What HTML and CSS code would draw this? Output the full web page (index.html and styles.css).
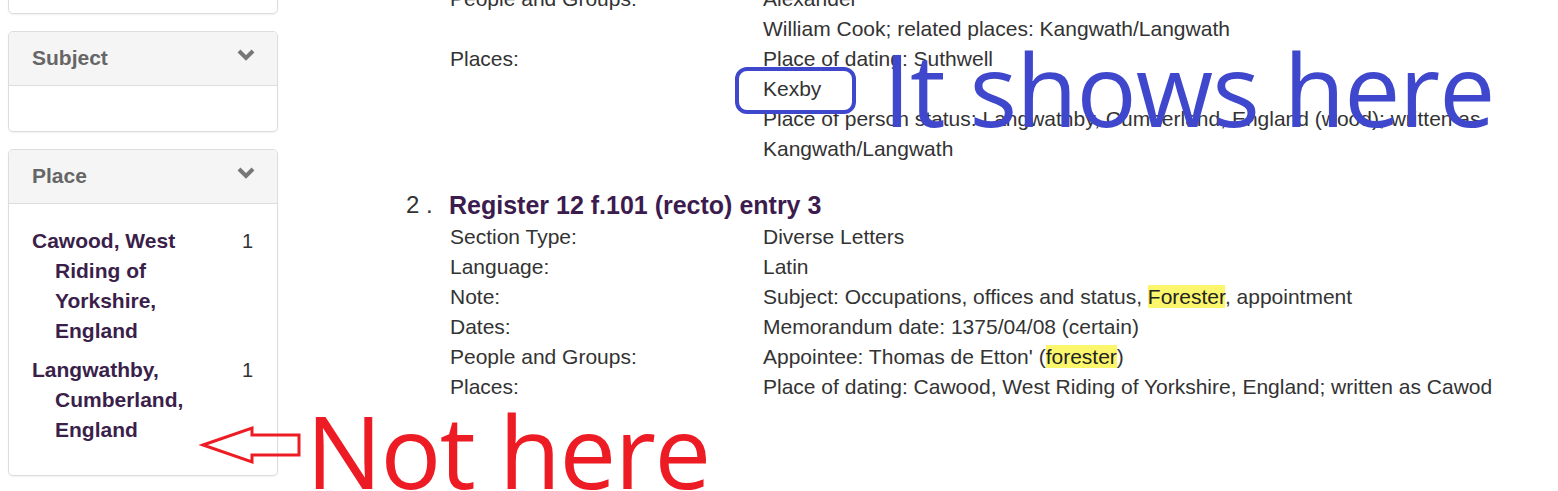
FILE: index.html
```html
<!DOCTYPE html>
<html lang="en">
<head>
<meta charset="utf-8">
<title>Search results</title>
<link rel="stylesheet" href="styles.css">
</head>
<body>
<div class="page">
  <aside class="sidebar">
    <div class="panel panel-cut"></div>
    <div class="panel">
      <div class="panel-head">
        <span>Subject</span>
        <svg class="chev" width="18" height="12" viewBox="0 0 18 12"><polyline points="2,2 9,9 16,2" fill="none" stroke="#777" stroke-width="4"/></svg>
      </div>
      <div class="panel-body empty"></div>
    </div>
    <div class="panel">
      <div class="panel-head">
        <span>Place</span>
        <svg class="chev" width="18" height="12" viewBox="0 0 18 12"><polyline points="2,2 9,9 16,2" fill="none" stroke="#777" stroke-width="4"/></svg>
      </div>
      <div class="panel-body">
        <ul class="facets">
          <li><span class="facet-label">Cawood, West Riding of Yorkshire, England</span><span class="count">1</span></li>
          <li><span class="facet-label">Langwathby, Cumberland, England</span><span class="count">1</span></li>
        </ul>
      </div>
    </div>
  </aside>

  <main class="results">
    <div class="entry entry-cut">
      <div class="fields">
        <div class="label">People and Groups:</div>
        <div class="value">Alexander<br>William Cook; related places: Kangwath/Langwath</div>
        <div class="label">Places:</div>
        <div class="value">Place of dating: Suthwell<br>Kexby<br>Place of person status: Langwathby, Cumberland, England (wood); written as Kangwath/Langwath</div>
      </div>
    </div>
    <div class="entry">
      <div class="entry-title"><span class="num">2 .</span><span class="title">Register 12 f.101 (recto) entry 3</span></div>
      <div class="fields">
        <div class="label">Section Type:</div>
        <div class="value">Diverse Letters</div>
        <div class="label">Language:</div>
        <div class="value">Latin</div>
        <div class="label">Note:</div>
        <div class="value">Subject: Occupations, offices and status, <mark>Forester</mark>, appointment</div>
        <div class="label">Dates:</div>
        <div class="value">Memorandum date: 1375/04/08 (certain)</div>
        <div class="label">People and Groups:</div>
        <div class="value">Appointee: Thomas de Etton' (<mark>forester</mark>)</div>
        <div class="label">Places:</div>
        <div class="value">Place of dating: Cawood, West Riding of Yorkshire, England; written as Cawod</div>
      </div>
    </div>
  </main>
</div>

<div class="note-box"></div>
<div class="note note-blue">It shows here</div>
<svg class="arrow" width="110" height="50" viewBox="195 420 110 50"><polygon points="203,445 252,428 252,435 299,435 299,455 252,455 252,462" fill="none" stroke="#ed1c24" stroke-width="3" stroke-linejoin="miter"/></svg>
<div class="note note-red">Not here</div>
</body>
</html>
```

FILE: styles.css
```css
html, body {
  margin: 0;
  padding: 0;
  background: #fff;
}
body {
  position: relative;
  width: 1558px;
  height: 491px;
  overflow: hidden;
  font-family: "Liberation Sans", Arial, sans-serif;
  color: #333;
}
.page {
  display: flex;
  margin-top: -40px;
}
.sidebar {
  width: 270px;
  margin-left: 8px;
  display: flex;
  flex-direction: column;
  gap: 17px;
  flex: none;
}
.panel {
  border: 1px solid #ddd;
  border-radius: 5px;
  box-shadow: 0 1px 2px rgba(0,0,0,0.06);
  background: #fff;
  overflow: hidden;
}
.panel-cut {
  height: 52px;
}
.panel-head {
  background: #f5f5f5;
  border-bottom: 1px solid #ddd;
  padding: 11px 22px 12px 23px;
  line-height: 30px;
  font-size: 21px;
  font-weight: bold;
  color: #666;
  display: flex;
  justify-content: space-between;
  align-items: center;
}
.chev {
  margin-top: -7px;
}
.panel-body.empty {
  height: 45px;
}
.facets {
  list-style: none;
  margin: 0;
  padding: 22px 24px 30px 23px;
  display: flex;
  flex-direction: column;
  gap: 9px;
}
.facets li {
  display: flex;
  justify-content: space-between;
  line-height: 30px;
  font-size: 21px;
}
.facet-label {
  font-weight: bold;
  color: #3b1f4b;
  padding-left: 23px;
  text-indent: -23px;
  width: 170px;
}
.count {
  font-size: 20px;
  color: #333;
}
.results {
  margin-left: 128px;
  padding-top: 24px;
  font-size: 21px;
  line-height: 30px;
}
.entry-cut {
  margin-left: 44px;
}
.entry + .entry {
  margin-top: 24px;
}
.entry-title {
  display: flex;
  line-height: 34px;
}
.num {
  width: 43px;
  font-size: 24px;
  color: #333;
}
.title {
  font-size: 25px;
  font-weight: bold;
  color: #3c1c4e;
}
.fields {
  display: grid;
  grid-template-columns: 313px 780px;
}
.entry:not(.entry-cut) .fields {
  margin-left: 44px;
}
mark {
  background: #fbf66b;
  color: #222;
  padding: 0;
}
.note-box {
  position: absolute;
  left: 735px;
  top: 67px;
  width: 113px;
  height: 39px;
  border: 4px solid #3f48cc;
  border-radius: 12px;
}
.note {
  position: absolute;
  font-family: "Open Sans", "Noto Sans", sans-serif;
  font-weight: 400;
  white-space: nowrap;
  line-height: 0.8;
}
.note-blue {
  color: #3f48cc;
  font-size: 100px;
  left: 883px;
  top: 48px;
  letter-spacing: -1px;
}
.note-red {
  color: #ed1c24;
  font-size: 101px;
  left: 306px;
  top: 410px;
  letter-spacing: -1.5px;
}
.arrow {
  position: absolute;
  left: 195px;
  top: 420px;
}
```
